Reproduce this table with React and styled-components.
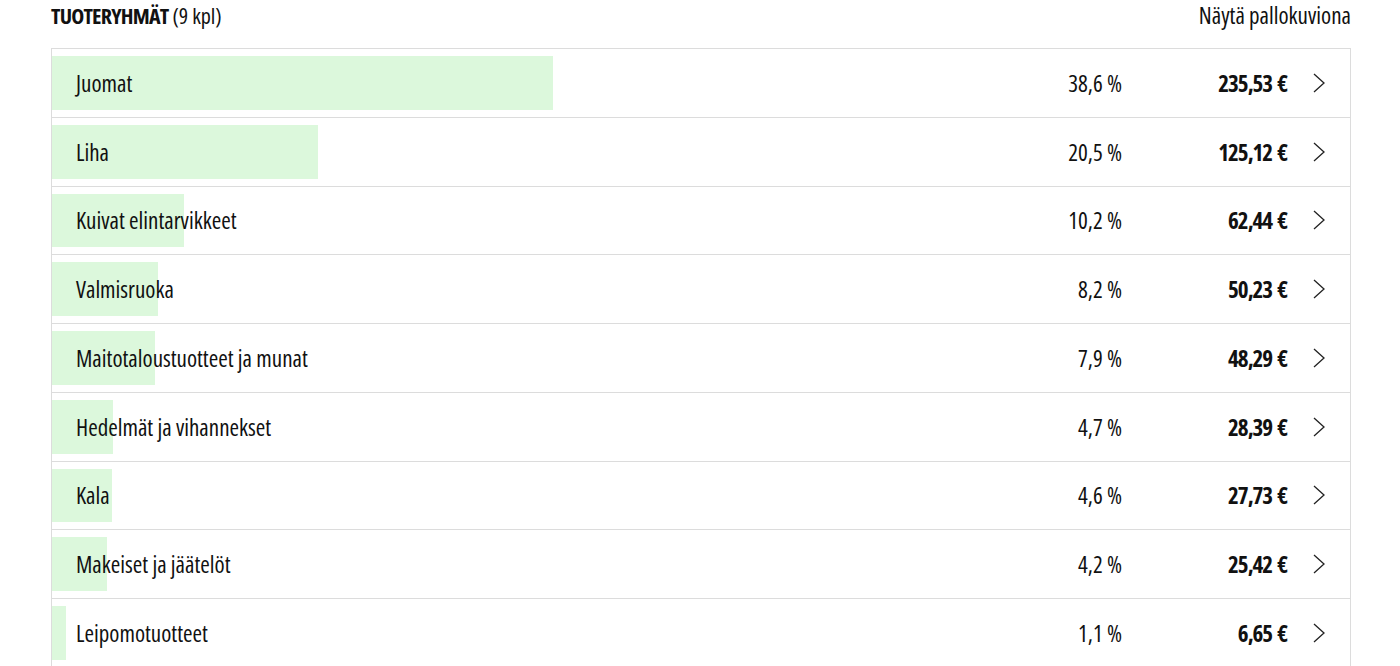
import React from 'react';
import styled, { createGlobalStyle } from 'styled-components';

const rows = [
  { name: 'Juomat', pct: 38.6, sum: '235,53 €' },
  { name: 'Liha', pct: 20.5, sum: '125,12 €' },
  { name: 'Kuivat elintarvikkeet', pct: 10.2, sum: '62,44 €' },
  { name: 'Valmisruoka', pct: 8.2, sum: '50,23 €' },
  { name: 'Maitotaloustuotteet ja munat', pct: 7.9, sum: '48,29 €' },
  { name: 'Hedelmät ja vihannekset', pct: 4.7, sum: '28,39 €' },
  { name: 'Kala', pct: 4.6, sum: '27,73 €' },
  { name: 'Makeiset ja jäätelöt', pct: 4.2, sum: '25,42 €' },
  { name: 'Leipomotuotteet', pct: 1.1, sum: '6,65 €' },
];

const GlobalStyle = createGlobalStyle`
  body {
    margin: 0;
    background: #fff;
    color: #111;
    font-family: "Open Sans", "Liberation Sans", sans-serif;
    font-stretch: 75%;
  }
`;

const Page = styled.div`
  padding: 0 49px 0 51px;
`;

const Header = styled.div`
  display: flex;
  justify-content: space-between;
  align-items: center;
  height: 30px;
  margin-bottom: 18px;
`;

const Title = styled.h2`
  margin: 0;
  font-size: 22px;
  font-weight: 400;
  strong {
    font-weight: 700;
    letter-spacing: -0.8px;
  }
`;

const Toggle = styled.button`
  border: 0;
  background: none;
  padding: 0;
  font-family: inherit;
  font-stretch: inherit;
  font-size: 23px;
  color: inherit;
  cursor: pointer;
`;

const List = styled.div`
  border: 1px solid #dcdcdc;
  border-bottom: 0;
`;

const Row = styled.div`
  position: relative;
  display: flex;
  align-items: center;
  height: 68.75px;
  box-sizing: border-box;
  padding: 7px 0;
  border-bottom: 1px solid #dcdcdc;
  font-size: 23px;
`;

const Bar = styled.div`
  height: 100%;
  background: #dcf8dc;
`;

const Content = styled.div`
  position: absolute;
  inset: 0;
  display: flex;
  align-items: center;
  padding: 0 25px 0 24px;
`;

const Name = styled.span`
  flex: 1;
`;

const Pct = styled.span`
  width: 120px;
  text-align: right;
`;

const Sum = styled.span`
  width: 165px;
  text-align: right;
  font-size: 23px;
  font-weight: 700;
  letter-spacing: -1px;
  word-spacing: 2px;
  white-space: nowrap;
`;

const Chevron = styled.svg`
  margin-left: 26px;
  width: 12px;
  height: 20px;
  flex: none;
`;

export default function App() {
  return (
    <Page>
      <GlobalStyle />
      <Header>
        <Title>
          <strong>TUOTERYHMÄT</strong> (9 kpl)
        </Title>
        <Toggle>Näytä pallokuviona</Toggle>
      </Header>
      <List>
        {rows.map((r) => (
          <Row key={r.name}>
            <Bar style={{ width: `${r.pct}%` }} />
            <Content>
              <Name>{r.name}</Name>
              <Pct>{r.pct.toString().replace('.', ',')} %</Pct>
              <Sum>{r.sum}</Sum>
              <Chevron viewBox="0 0 12 20">
                <polyline points="1,1 11,10 1,19" fill="none" stroke="#222" strokeWidth="1.3" />
              </Chevron>
            </Content>
          </Row>
        ))}
      </List>
    </Page>
  );
}
